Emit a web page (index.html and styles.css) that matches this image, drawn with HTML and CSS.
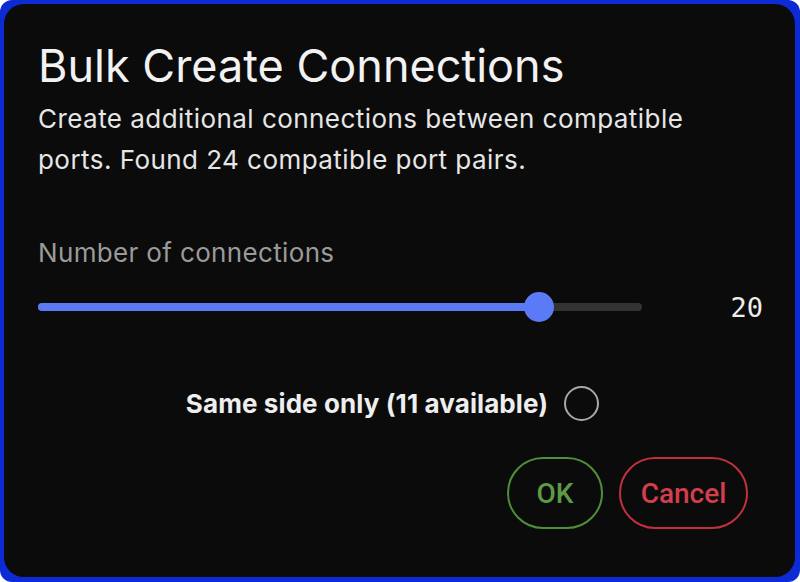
FILE: index.html
```html
<!DOCTYPE html>
<html>
<head>
<meta charset="utf-8">
<link rel="stylesheet" href="styles.css">
</head>
<body>
<div class="frame">
  <div class="dialog">
    <h1 class="title">Bulk Create Connections</h1>
    <p class="desc">Create additional connections between compatible ports. Found 24 compatible port pairs.</p>
    <div class="label">Number of connections</div>
    <div class="slider-row">
      <div class="track">
        <div class="fill" style="width: 82.8%"></div>
        <div class="thumb" style="left: 82.8%"></div>
      </div>
      <div class="value">20</div>
    </div>
    <div class="check-row">
      <span class="check-label">Same side only (11 available)</span>
      <span class="radio"></span>
    </div>
    <div class="actions">
      <button class="btn ok">OK</button>
      <button class="btn cancel">Cancel</button>
    </div>
  </div>
</div>
</body>
</html>
```

FILE: styles.css
```css
html, body {
  margin: 0;
  padding: 0;
  background: #ffffff;
}
.frame {
  width: 800px;
  height: 582px;
  box-sizing: border-box;
  background: #0d2bd4;
  border-radius: 12px;
  padding: 4px 5px 5px 4px;
}
.dialog {
  height: 100%;
  box-sizing: border-box;
  background: #0b0b0b;
  border-radius: 20px;
  padding: 34px 32px 0 34px;
  font-family: Inter, Roboto, sans-serif;
  color: #eeeeee;
}
.title {
  margin: 0;
  font-size: 45px;
  font-weight: 400;
  line-height: 56px;
  color: #f2f2f2;
}
.desc {
  margin: 4px 0 0;
  font-size: 26px;
  line-height: 41px;
  color: #e6e6e6;
  width: 680px;
  letter-spacing: 0.45px;
}
.label {
  margin-top: 57px;
  font-size: 26px;
  line-height: 32px;
  color: #9a9a9a;
  letter-spacing: 0.35px;
}
.slider-row {
  display: grid;
  grid-template-columns: 1fr auto;
  align-items: center;
  column-gap: 88px;
  margin-top: 20px;
  height: 36px;
}
.track {
  position: relative;
  height: 8px;
  border-radius: 4px;
  background: #333333;
}
.fill {
  height: 100%;
  border-radius: 4px;
  background: #5b7af5;
}
.thumb {
  position: absolute;
  top: 50%;
  width: 30px;
  height: 30px;
  margin: -15px 0 0 -15px;
  border-radius: 50%;
  background: #5b7af5;
}
.value {
  font-family: "DejaVu Sans Mono", monospace;
  font-size: 27px;
  color: #eeeeee;
}
.check-row {
  display: flex;
  justify-content: center;
  align-items: center;
  gap: 16px;
  margin-top: 61px;
  padding-right: 16px;
}
.check-label {
  font-size: 26px;
  font-weight: 700;
  color: #eeeeee;
  letter-spacing: 0.1px;
}
.radio {
  width: 31px;
  height: 31px;
  border: 2px solid #a8a8a8;
  border-radius: 50%;
}
.actions {
  display: flex;
  justify-content: flex-end;
  gap: 16px;
  margin-top: 36px;
  padding-right: 15px;
}
.btn {
  height: 72px;
  border-radius: 36px;
  background: transparent;
  font-family: Roboto, "Liberation Sans", sans-serif;
  font-size: 28px;
  font-weight: 500;
  padding: 0;
  border: 2px solid;
}
.ok {
  width: 96px;
  color: #5d9a45;
  border-color: #4f8f3a;
}
.cancel {
  width: 129px;
  color: #d23e4b;
  border-color: #c2303e;
}
```
